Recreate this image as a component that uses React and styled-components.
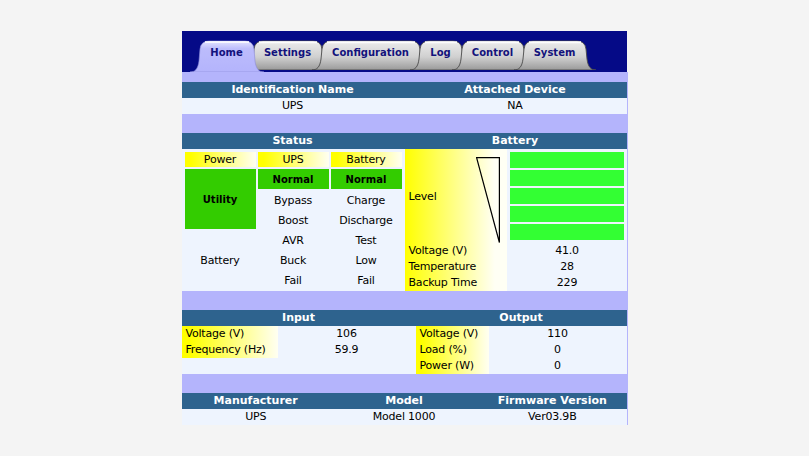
import React from 'react';
import styled, { createGlobalStyle } from 'styled-components';

const GlobalStyle = createGlobalStyle`
  html, body { margin: 0; padding: 0; background: #f4f4f4; }
  body { font-family: "DejaVu Sans", Verdana, sans-serif; color: #000; }
`;

const NAVY = '#050a87';
const HEAD = '#2e638e';
const LAV = '#b4b4fc';
const DATA = '#eef4fe';
const YELLOW = 'linear-gradient(to right, #ffff00 8%, #fffff2 100%)';

const Page = styled.div`
  padding-top: 31px;
  display: flex;
  justify-content: center;
`;

const Panel = styled.div`
  width: 446px;
`;

const NavBar = styled.div`
  height: 41px;
  margin-right: 1px;
  background: ${NAVY};
  display: flex;
  align-items: flex-end;
  padding-left: 8px;
  box-sizing: border-box;
`;

const TabItem = styled.div`
  position: relative;
  flex: none;
  box-sizing: border-box;
  width: ${(p) => p.$w}px;
  height: ${(p) => (p.$active ? 32 : 30)}px;
  margin-left: ${(p) => (p.$first ? 0 : -20)}px;
  margin-bottom: ${(p) => (p.$active ? 0 : 2)}px;
  z-index: ${(p) => (p.$active ? 3 : 1)};
  display: flex;
  justify-content: center;
  padding-top: 7px;
  font-size: 10px;
  line-height: 12px;
  font-weight: bold;
  color: #12127c;
`;

const TabShape = styled.svg`
  position: absolute;
  left: 0;
  top: 0;
`;

const TabLabel = styled.span`
  position: relative;
`;

const Body = styled.div`
  border-right: 1px solid ${LAV};
  background: ${DATA};
`;

const Strip = styled.div`
  height: ${(p) => p.$h}px;
  background: ${LAV};
`;

const HeadRow = styled.div`
  display: grid;
  grid-template-columns: ${(p) => p.$cols};
  height: 16px;
  background: ${HEAD};
  color: #fff;
  font-weight: bold;
  font-size: 11px;
  line-height: 16px;
  text-align: center;
`;

const DataRow = styled.div`
  display: grid;
  grid-template-columns: ${(p) => p.$cols};
  height: 16px;
  background: ${DATA};
  font-size: 11px;
  line-height: 16px;
  letter-spacing: -0.2px;
  text-align: center;
`;

const StatusSection = styled.div`
  display: flex;
  height: 142px;
  background: ${DATA};
`;

const StatusGrid = styled.div`
  width: 223px;
  box-sizing: border-box;
  padding: 3px 3px 2px 3px;
  display: grid;
  grid-template-columns: repeat(3, 71px);
  grid-template-rows: 15px 20px repeat(5, 18px);
  gap: 2px;
`;

const toneBg = { head: YELLOW, ok: '#33cc00', plain: 'transparent' };

const Cell = styled.div`
  grid-row: ${(p) => (p.$span ? `span ${p.$span}` : 'auto')};
  display: flex;
  align-items: center;
  justify-content: center;
  background: ${(p) => toneBg[p.$tone || 'plain']};
  font-size: ${(p) => (p.$tone === 'ok' ? 10 : 11)}px;
  font-weight: ${(p) => (p.$tone === 'ok' ? 'bold' : 'normal')};
  letter-spacing: ${(p) => (p.$tone === 'ok' ? 0 : -0.2)}px;
`;

const LevelCol = styled.div`
  width: 102px;
  background: linear-gradient(to right, #ffff00 0%, #fffff4 88%);
  display: grid;
  grid-template-rows: 94px repeat(3, 16px);
`;

const LevelHead = styled.div`
  display: flex;
  align-items: center;
  justify-content: space-between;
  padding: 0 7px 0 4px;
  font-size: 11px;
  letter-spacing: -0.2px;
`;

const Wedge = styled.svg`
  align-self: flex-end;
`;

const Label = styled.div`
  padding-left: 4px;
  font-size: 11px;
  line-height: 16px;
  letter-spacing: -0.2px;
  white-space: nowrap;
  background: ${(p) => (p.$fill ? YELLOW : 'transparent')};
`;

const Value = styled.div`
  font-size: 11px;
  line-height: 16px;
  letter-spacing: -0.2px;
  text-align: center;
`;

const ValueCol = styled.div`
  width: 119px;
  margin-left: 1px;
  display: grid;
  grid-template-rows: 94px repeat(3, 16px);
`;

const BarStack = styled.div`
  display: flex;
  flex-direction: column;
  gap: 2px;
  padding: 3px 3px 3px 2px;
`;

const Bar = styled.div`
  flex: 1;
  background: #33ff33;
`;

const IOGrid = styled.div`
  display: grid;
  grid-template-columns: 96px 138px 73px 138px;
  grid-template-rows: repeat(3, 16px);
  background: ${DATA};
`;

const tabs = [
  { label: 'Home', w: 74, active: true },
  { label: 'Settings', w: 88 },
  { label: 'Configuration', w: 118 },
  { label: 'Log', w: 62 },
  { label: 'Control', w: 82 },
  { label: 'System', w: 82 },
];

function tabPath(W, H) {
  return `M0,${H} C5,${H} 8,${H - 3} 9,${H - 11} L10,9 Q11,1 19,1 L${W - 19},1 Q${W - 11},1 ${W - 10},9 L${W - 9},${H - 11} C${W - 8},${H - 3} ${W - 5},${H} ${W},${H} Z`;
}

function Tab({ label, w, active, first }) {
  const H = active ? 32 : 30;
  const id = `tabfill-${label}`;
  return (
    <TabItem $w={w} $active={active} $first={first}>
      <TabShape width={w} height={H} viewBox={`0 0 ${w} ${H}`}>
        <defs>
          <linearGradient id={id} x1="0" y1="0" x2="0" y2="1">
            {active ? (
              <>
                <stop offset="0" stopColor="#e4e4ff" />
                <stop offset="0.25" stopColor="#bcbcfc" />
                <stop offset="1" stopColor={LAV} />
              </>
            ) : (
              <>
                <stop offset="0" stopColor="#ffffff" />
                <stop offset="0.12" stopColor="#e6e6e6" />
                <stop offset="0.55" stopColor="#d0d0d0" />
                <stop offset="1" stopColor="#9a9a9a" />
              </>
            )}
          </linearGradient>
        </defs>
        <path
          d={tabPath(w, H)}
          fill={`url(#${id})`}
          stroke={active ? '#8a8ad8' : '#4a4a4a'}
          strokeWidth={active ? 0.6 : 0.9}
        />
        <path d={`M15,2 L${w - 15},2`} stroke="#ffffff" strokeWidth="1.4" />
      </TabShape>
      <TabLabel>{label}</TabLabel>
    </TabItem>
  );
}

export default function App() {
  return (
    <>
      <GlobalStyle />
      <Page>
        <Panel>
          <NavBar>
            {tabs.map((t, i) => (
              <Tab key={t.label} {...t} first={i === 0} />
            ))}
          </NavBar>
          <Body>
            <Strip $h={10} />
            <HeadRow $cols="222px 1fr">
              <div>Identification Name</div>
              <div>Attached Device</div>
            </HeadRow>
            <DataRow $cols="222px 1fr">
              <div>UPS</div>
              <div>NA</div>
            </DataRow>
            <Strip $h={19} />
            <HeadRow $cols="222px 1fr">
              <div>Status</div>
              <div>Battery</div>
            </HeadRow>
            <StatusSection>
              <StatusGrid>
                <Cell $tone="head">Power</Cell>
                <Cell $tone="head">UPS</Cell>
                <Cell $tone="head">Battery</Cell>
                <Cell $tone="ok" $span={3}>Utility</Cell>
                <Cell $tone="ok">Normal</Cell>
                <Cell $tone="ok">Normal</Cell>
                <Cell>Bypass</Cell>
                <Cell>Charge</Cell>
                <Cell>Boost</Cell>
                <Cell>Discharge</Cell>
                <Cell $span={3}>Battery</Cell>
                <Cell>AVR</Cell>
                <Cell>Test</Cell>
                <Cell>Buck</Cell>
                <Cell>Low</Cell>
                <Cell>Fail</Cell>
                <Cell>Fail</Cell>
              </StatusGrid>
              <LevelCol>
                <LevelHead>
                  <span>Level</span>
                  <Wedge width="24" height="86" viewBox="0 0 24 86">
                    <polygon points="0.6,0.6 23.4,0.6 23.4,85.5" fill="none" stroke="#000" strokeWidth="1.2" />
                  </Wedge>
                </LevelHead>
                <Label>Voltage (V)</Label>
                <Label>Temperature</Label>
                <Label>Backup Time</Label>
              </LevelCol>
              <ValueCol>
                <BarStack>
                  {[0, 1, 2, 3, 4].map((i) => (
                    <Bar key={i} />
                  ))}
                </BarStack>
                <Value>41.0</Value>
                <Value>28</Value>
                <Value>229</Value>
              </ValueCol>
            </StatusSection>
            <Strip $h={19} />
            <HeadRow $cols="234px 1fr">
              <div>Input</div>
              <div>Output</div>
            </HeadRow>
            <IOGrid>
              <Label $fill>Voltage (V)</Label>
              <Value>106</Value>
              <Label $fill>Voltage (V)</Label>
              <Value>110</Value>
              <Label $fill>Frequency (Hz)</Label>
              <Value>59.9</Value>
              <Label $fill>Load (%)</Label>
              <Value>0</Value>
              <Label />
              <Value />
              <Label $fill>Power (W)</Label>
              <Value>0</Value>
            </IOGrid>
            <Strip $h={19} />
            <HeadRow $cols="1fr 1fr 1fr">
              <div>Manufacturer</div>
              <div>Model</div>
              <div>Firmware Version</div>
            </HeadRow>
            <DataRow $cols="1fr 1fr 1fr">
              <div>UPS</div>
              <div>Model 1000</div>
              <div>Ver03.9B</div>
            </DataRow>
          </Body>
        </Panel>
      </Page>
    </>
  );
}
